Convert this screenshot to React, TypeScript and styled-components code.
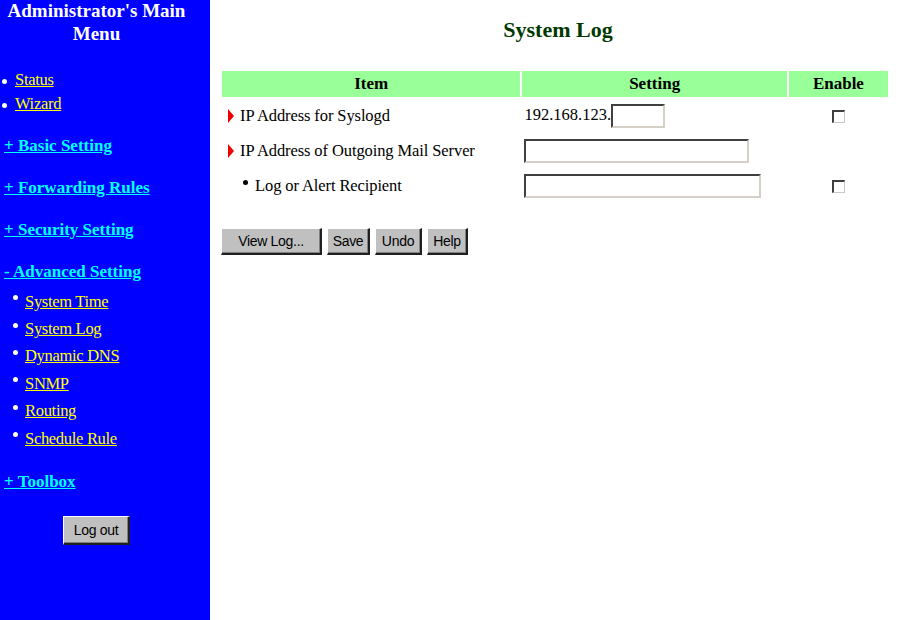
import styled, { createGlobalStyle } from "styled-components";

const GlobalStyle = createGlobalStyle`
  html, body {
    margin: 0;
    padding: 0;
    background: #ffffff;
    font-family: "Liberation Serif", "Times New Roman", serif;
  }
`;

type SubLink = { label: string };

const topLinks = ["Status", "Wizard"];
const advancedLinks: SubLink[] = [
  { label: "System Time" },
  { label: "System Log" },
  { label: "Dynamic DNS" },
  { label: "SNMP" },
  { label: "Routing" },
  { label: "Schedule Rule" },
];

export default function App() {
  return (
    <>
      <GlobalStyle />
      <Page>
        <Sidebar>
          <MenuTitle>
            Administrator's Main
            <br />
            Menu
          </MenuTitle>
          <TopList>
            {topLinks.map((l) => (
              <TopItem key={l}>
                <Dot />
                <YellowLink href="#">{l}</YellowLink>
              </TopItem>
            ))}
          </TopList>
          <SectionLink href="#">+ Basic Setting</SectionLink>
          <SectionLink href="#">+ Forwarding Rules</SectionLink>
          <SectionLink href="#">+ Security Setting</SectionLink>
          <SectionLink href="#">- Advanced Setting</SectionLink>
          <SubList>
            {advancedLinks.map((l) => (
              <SubItem key={l.label}>
                <SmallDot />
                <YellowLink href="#">{l.label}</YellowLink>
              </SubItem>
            ))}
          </SubList>
          <SectionLink href="#" $gap={18}>
            + Toolbox
          </SectionLink>
          <LogoutRow>
            <GrayButton $w={67} $h={29}>Log out</GrayButton>
          </LogoutRow>
        </Sidebar>

        <Main>
          <PageTitle>System Log</PageTitle>
          <Table>
            <colgroup>
              <col style={{ width: 298 }} />
              <col style={{ width: 264 }} />
              <col style={{ width: 99 }} />
            </colgroup>
            <thead>
              <tr>
                <HeadCell>Item</HeadCell>
                <HeadCell>Setting</HeadCell>
                <HeadCell>Enable</HeadCell>
              </tr>
            </thead>
            <tbody>
              <Row>
                <ItemCell>
                  <Arrow />
                  IP Address for Syslogd
                </ItemCell>
                <SettingCell>
                  192.168.123.
                  <TextBox $w={54} />
                </SettingCell>
                <EnableCell>
                  <Check type="checkbox" />
                </EnableCell>
              </Row>
              <Row>
                <ItemCell>
                  <Arrow />
                  IP Address of Outgoing Mail Server
                </ItemCell>
                <SettingCell>
                  <TextBox $w={225} />
                </SettingCell>
                <EnableCell />
              </Row>
              <Row>
                <ItemCell $indent>
                  <TinyDot />
                  Log or Alert Recipient
                </ItemCell>
                <SettingCell>
                  <TextBox $w={237} />
                </SettingCell>
                <EnableCell>
                  <Check type="checkbox" />
                </EnableCell>
              </Row>
            </tbody>
          </Table>
          <ButtonRow>
            <GrayButton $w={101}>View Log...</GrayButton>
            <GrayButton $w={43}>Save</GrayButton>
            <GrayButton $w={47}>Undo</GrayButton>
            <GrayButton $w={41}>Help</GrayButton>
          </ButtonRow>
        </Main>
      </Page>
    </>
  );
}

const Page = styled.div`
  display: flex;
  width: 919px;
  height: 620px;
  overflow: hidden;
`;

const Sidebar = styled.div`
  width: 210px;
  flex-shrink: 0;
  background: #0000ff;
  display: flex;
  flex-direction: column;
  padding: 0 17px 0 0;
  box-sizing: border-box;
`;

const MenuTitle = styled.div`
  color: #ffffff;
  font-weight: bold;
  font-size: 19px;
  line-height: 23px;
  text-align: center;
  margin-top: -1px;
  white-space: nowrap;
`;

const TopList = styled.div`
  display: flex;
  flex-direction: column;
  margin-top: 23px;
`;

const TopItem = styled.div`
  height: 24px;
  display: flex;
  align-items: center;
  padding-left: 2px;
`;

const Dot = styled.span`
  width: 5px;
  height: 5px;
  border-radius: 50%;
  background: #ffffff;
  margin-right: 8px;
  margin-top: 2px;
`;

const YellowLink = styled.a`
  color: #ffff00;
  font-size: 16.5px;
  text-decoration: underline;
  letter-spacing: -0.3px;
`;

const SectionLink = styled.a<{ $gap?: number }>`
  display: block;
  height: 24px;
  line-height: 24px;
  margin-top: ${(p) => p.$gap ?? 18}px;
  padding-left: 4px;
  color: #00ffff;
  font-weight: bold;
  font-size: 17px;
  text-decoration: underline;
  white-space: nowrap;
`;

const SubList = styled.div`
  display: flex;
  flex-direction: column;
  margin-top: 4px;
`;

const SubItem = styled.div`
  height: 27.4px;
  display: flex;
  align-items: center;
  padding-left: 13px;
`;

const SmallDot = styled.span`
  width: 5px;
  height: 5px;
  border-radius: 50%;
  background: #ffffff;
  margin-right: 7px;
  margin-bottom: 8px;
`;

const LogoutRow = styled.div`
  display: flex;
  justify-content: center;
  margin-top: 22px;
`;

const Main = styled.div`
  flex: 1;
  padding-left: 10px;
  display: flex;
  flex-direction: column;
  align-items: flex-start;
`;

const PageTitle = styled.h1`
  margin: 16px 0 0 0;
  width: 676px;
  text-align: center;
  font-size: 22px;
  line-height: 28px;
  font-weight: bold;
  color: #003800;
`;

const Table = styled.table`
  margin-top: 25px;
  width: 670px;
  table-layout: fixed;
  border-spacing: 2px;
  border-collapse: separate;
  font-size: 16.5px;
  color: #000000;
`;

const HeadCell = styled.th`
  height: 26px;
  padding: 0;
  background: #99ff99;
  font-weight: bold;
  font-size: 17px;
  text-align: center;
`;

const Row = styled.tr`
  height: 33px;
`;

const ItemCell = styled.td<{ $indent?: boolean }>`
  padding: 0 0 0 ${(p) => (p.$indent ? 21 : 6)}px;
  white-space: nowrap;
  vertical-align: middle;
  letter-spacing: -0.1px;
`;

const Arrow = styled.span`
  display: inline-block;
  width: 0;
  height: 0;
  border-top: 7px solid transparent;
  border-bottom: 7px solid transparent;
  border-left: 6px solid #ee0000;
  margin-right: 6px;
  vertical-align: -2px;
`;

const TinyDot = styled.span`
  display: inline-block;
  width: 5px;
  height: 5px;
  border-radius: 50%;
  background: #000000;
  margin-right: 7px;
  vertical-align: 6px;
`;

const SettingCell = styled.td`
  padding: 0 0 0 2px;
  white-space: nowrap;
  vertical-align: middle;
`;

const TextBox = styled.input.attrs({ type: "text" })<{ $w: number }>`
  width: ${(p) => p.$w}px;
  height: 24px;
  box-sizing: border-box;
  margin: 0;
  padding: 0 2px;
  background: #ffffff;
  border-style: solid;
  border-width: 2px;
  border-color: #404040 #d4d0c8 #d4d0c8 #404040;
  vertical-align: middle;
  outline: none;
`;

const EnableCell = styled.td`
  text-align: center;
  vertical-align: middle;
  padding: 0;
`;

const Check = styled.input`
  appearance: none;
  width: 13px;
  height: 13px;
  margin: 0;
  box-sizing: border-box;
  background: #ffffff;
  border-style: solid;
  border-width: 2px 1px 1px 2px;
  border-color: #404040 #c8c8c8 #c8c8c8 #404040;
  vertical-align: middle;
`;

const ButtonRow = styled.div`
  display: flex;
  gap: 5px;
  margin-top: 24px;
  padding-left: 1px;
`;

const GrayButton = styled.button<{ $w: number; $h?: number }>`
  width: ${(p) => p.$w}px;
  height: ${(p) => p.$h ?? 27}px;
  flex-shrink: 0;
  box-sizing: border-box;
  padding: 0;
  background: #c0c0c0;
  color: #000000;
  font-family: "Liberation Sans", Arial, sans-serif;
  font-size: 14px;
  border-style: solid;
  border-width: 1px 2px 2px 1px;
  border-color: #ffffff #202020 #202020 #ffffff;
  box-shadow: inset -1px -1px 0 #808080;
  letter-spacing: -0.3px;
`;
